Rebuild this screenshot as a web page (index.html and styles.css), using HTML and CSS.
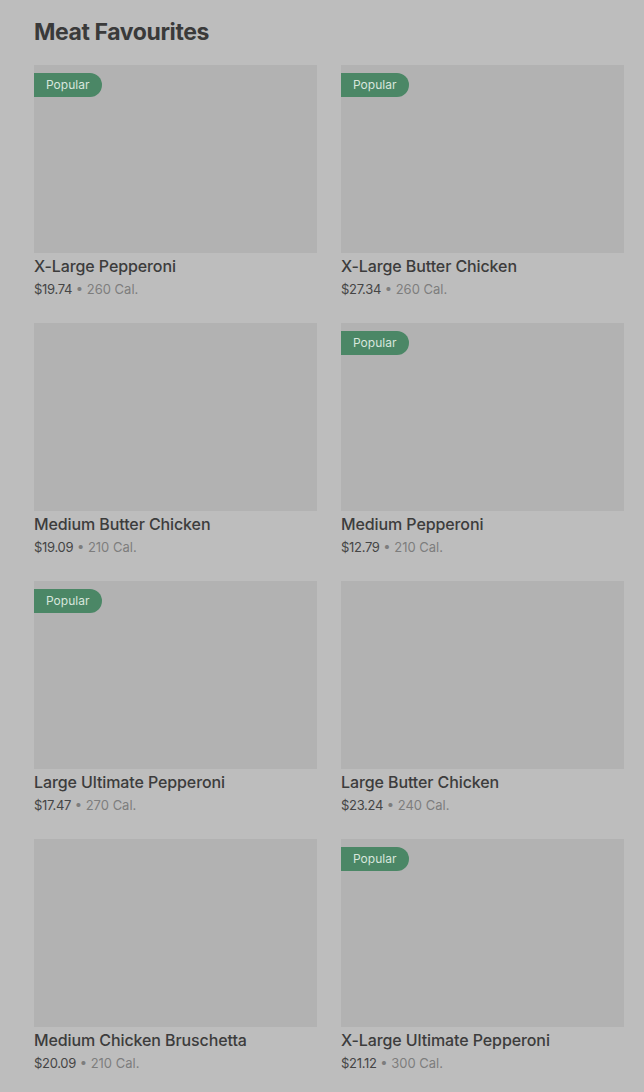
FILE: index.html
```html
<!DOCTYPE html>
<html lang="en">
<head>
    <meta charset="UTF-8">
    <link rel="stylesheet" href="styles.css">
</head>
<body>
    <h2 class="section-title">Meat Favourites</h2>
    <div class="menu-grid">
        <div class="item">
            <div class="thumb"><span class="badge">Popular</span></div>
            <div class="item-name">X-Large Pepperoni</div>
            <div class="item-meta"><span class="price">$19.74</span> &bull; 260 Cal.</div>
        </div>
        <div class="item">
            <div class="thumb"><span class="badge">Popular</span></div>
            <div class="item-name">X-Large Butter Chicken</div>
            <div class="item-meta"><span class="price">$27.34</span> &bull; 260 Cal.</div>
        </div>
        <div class="item">
            <div class="thumb"></div>
            <div class="item-name">Medium Butter Chicken</div>
            <div class="item-meta"><span class="price">$19.09</span> &bull; 210 Cal.</div>
        </div>
        <div class="item">
            <div class="thumb"><span class="badge">Popular</span></div>
            <div class="item-name">Medium Pepperoni</div>
            <div class="item-meta"><span class="price">$12.79</span> &bull; 210 Cal.</div>
        </div>
        <div class="item">
            <div class="thumb"><span class="badge">Popular</span></div>
            <div class="item-name">Large Ultimate Pepperoni</div>
            <div class="item-meta"><span class="price">$17.47</span> &bull; 270 Cal.</div>
        </div>
        <div class="item">
            <div class="thumb"></div>
            <div class="item-name">Large Butter Chicken</div>
            <div class="item-meta"><span class="price">$23.24</span> &bull; 240 Cal.</div>
        </div>
        <div class="item">
            <div class="thumb"></div>
            <div class="item-name">Medium Chicken Bruschetta</div>
            <div class="item-meta"><span class="price">$20.09</span> &bull; 210 Cal.</div>
        </div>
        <div class="item">
            <div class="thumb"><span class="badge">Popular</span></div>
            <div class="item-name">X-Large Ultimate Pepperoni</div>
            <div class="item-meta"><span class="price">$21.12</span> &bull; 300 Cal.</div>
        </div>
    </div>
</body>
</html>
```

FILE: styles.css
```css
body {
    margin: 0;
    padding: 18px 20px 0 34px;
    background-color: #bdbdbd;
    font-family: Inter, "Liberation Sans", Arial, sans-serif;
    color: #3c3c3c;
}

.section-title {
    margin: 0 0 18px 0;
    font-size: 23px;
    font-weight: 700;
    letter-spacing: -0.4px;
    line-height: 29px;
    color: #3a3a3a;
}

.menu-grid {
    display: grid;
    grid-template-columns: 283px 283px;
    column-gap: 24px;
    row-gap: 0;
}

.item {
    height: 258px;
}

.thumb {
    position: relative;
    height: 188px;
    background-color: #b2b2b2;
}

.badge {
    position: absolute;
    top: 8px;
    left: 0;
    height: 24px;
    line-height: 24px;
    padding: 0 13px 0 12px;
    background-color: #4b8766;
    color: #d8e6dd;
    font-size: 12px;
    border-radius: 0 12px 12px 0;
}

.item-name {
    margin-top: 2px;
    font-size: 16px;
    font-weight: 500;
    letter-spacing: -0.1px;
    line-height: 22px;
    color: #3c3c3c;
}

.item-meta {
    margin-top: 3px;
    font-size: 13px;
    line-height: 18px;
    color: #7d7d7d;
}

.price {
    color: #454545;
    letter-spacing: -0.3px;
}
```
